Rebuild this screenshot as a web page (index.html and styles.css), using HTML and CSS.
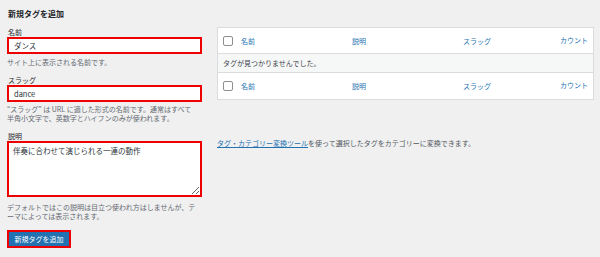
FILE: index.html
```html
<!DOCTYPE html>
<html lang="ja">
<head>
    <meta charset="UTF-8">
    <meta name="viewport" content="width=device-width, initial-scale=1.0">
    <title>タグ</title>
    <link rel="stylesheet" href="styles.css">
</head>
<body>
    <div class="wrap">
        <div class="col-left">
            <h2>新規タグを追加</h2>
            <div class="form-field">
                <label for="tag-name">名前</label>
                <input type="text" id="tag-name" class="marked" value="ダンス">
                <p class="help">サイト上に表示される名前です。</p>
            </div>
            <div class="form-field">
                <label for="tag-slug">スラッグ</label>
                <input type="text" id="tag-slug" class="marked" value="dance">
                <p class="help">“スラッグ” は URL に適した形式の名前です。通常はすべて<br>半角小文字で、英数字とハイフンのみが使われます。</p>
            </div>
            <div class="form-field">
                <label for="tag-description">説明</label>
                <textarea id="tag-description" class="marked">伴奏に合わせて演じられる一連の動作</textarea>
                <p class="help">デフォルトではこの説明は目立つ使われ方はしませんが、テーマによっては表示されます。</p>
            </div>
            <button class="submit">新規タグを追加</button>
        </div>

        <div class="col-right">
            <div class="tag-table">
                <div class="row head">
                    <input type="checkbox" class="check">
                    <a class="col name">名前</a>
                    <a class="col desc">説明</a>
                    <a class="col slug">スラッグ</a>
                    <a class="col count">カウント</a>
                </div>
                <div class="row empty">タグが見つかりませんでした。</div>
                <div class="row foot">
                    <input type="checkbox" class="check">
                    <a class="col name">名前</a>
                    <a class="col desc">説明</a>
                    <a class="col slug">スラッグ</a>
                    <a class="col count">カウント</a>
                </div>
            </div>
            <p class="convert"><a href="#">タグ・カテゴリー変換ツール</a>を使って選択したタグをカテゴリーに変換できます。</p>
        </div>
    </div>
</body>
</html>
```

FILE: styles.css
```css
* {
    margin: 0;
    padding: 0;
    box-sizing: border-box;
    font-family: 'Noto Sans CJK JP', 'Liberation Sans', sans-serif;
}

body {
    background: #f0f0f1;
    color: #3c434a;
    font-size: 7px;
}

.wrap {
    display: flex;
    gap: 15px;
    padding-left: 7px;
}

.col-left {
    width: 195px;
}

.col-right {
    width: 377px;
    padding-top: 27px;
}

h2 {
    font-size: 8px;
    font-weight: bold;
    line-height: 10px;
    color: #1d2327;
    margin: 9px 0 8px 1px;
}

.form-field {
    margin-bottom: 7px;
}

.form-field label {
    display: block;
    line-height: 10px;
    color: #1d2327;
    padding-left: 1px;
}

.form-field input,
.form-field textarea {
    display: block;
    width: 195px;
    background: #fff;
    border: 2px solid #ee0000;
    outline: none;
    font-size: 7.5px;
    color: #2c3338;
}

.form-field input {
    height: 17px;
    padding: 0 5px;
}

.form-field textarea {
    height: 56px;
    padding: 2px 4px;
    line-height: 11px;
}

.help {
    color: #646970;
    line-height: 9.5px;
    margin-top: 4px;
}

.form-field:nth-of-type(2) .help {
    margin-top: 3px;
}

.form-field:nth-of-type(3) .help {
    margin-top: 6px;
}

.submit {
    display: block;
    width: 64px;
    height: 18px;
    margin-top: 8px;
    background: #2271b1;
    border: 2px solid #ee0000;
    color: #fff;
    font-size: 7px;
}

.tag-table {
    background: #fff;
    border: 1px solid #dcdcde;
}

.row {
    display: flex;
    align-items: center;
    padding-left: 5px;
}

.row.head {
    height: 26px;
    border-bottom: 1px solid #dcdcde;
}

.row.empty {
    height: 19px;
    background: #f6f7f7;
    border-bottom: 1px solid #dcdcde;
}

.row.foot {
    height: 26px;
}

.check {
    appearance: none;
    width: 10px;
    height: 10px;
    border: 1px solid #8c8f94;
    border-radius: 2px;
    background: #fff;
    margin-right: 8px;
}

.col {
    color: #2271b1;
    text-decoration: none;
}

.name,
.desc {
    width: 111px;
}

.slug {
    flex: 1;
}

.count {
    align-self: flex-start;
    margin-top: 7px;
    padding-right: 5px;
}

.convert {
    margin-top: 38px;
    color: #50575e;
    line-height: 10px;
}

.convert a {
    color: #2271b1;
}
```
